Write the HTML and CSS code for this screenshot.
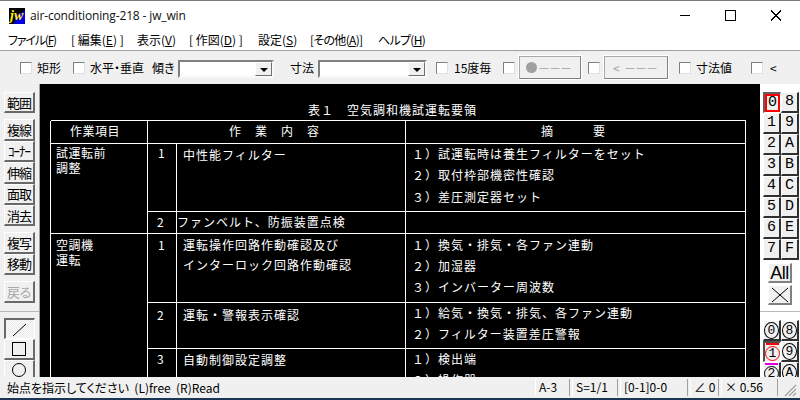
FILE: index.html
```html
<!DOCTYPE html>
<html lang="ja">
<head>
<meta charset="utf-8">
<title>air-conditioning-218 - jw_win</title>
<link rel="stylesheet" href="styles.css">
</head>
<body>
<div class="window">
  <header class="titlebar">
    <svg class="appicon" width="16" height="16" viewBox="0 0 16 16">
      <rect width="16" height="16" fill="#0000e0"/>
      <polygon points="0,0 16,0 16,3 7,7 5,16 0,16" fill="#000"/>
      <text class="appicon-text" x="1" y="12">jw</text>
    </svg>
    <span class="title">air-conditioning-218 - jw_win</span>
    <svg class="winctl" width="102" height="30" viewBox="0 0 102 30">
      <path class="ctl" d="M0 15.5H10M45.5 10.5h10v10h-10zM91 10.5l10 10M101 10.5l-10 10"/>
    </svg>
  </header>
  <nav class="menubar">
    <span class="m-file">ファイル(<u>F</u>)</span>
    <span>[ 編集(<u>E</u>) ]</span>
    <span>表示(<u>V</u>)</span>
    <span>[ 作図(<u>D</u>) ]</span>
    <span>設定(<u>S</u>)</span>
    <span class="m-tight">[その他(<u>A</u>)]</span>
    <span class="m-tight">ヘルプ(<u>H</u>)</span>
  </nav>
  <div class="toolbar">
    <i class="cb"></i><span>矩形</span>
    <i class="cb"></i><span>水平・垂直</span>
    <span>傾き</span>
    <div class="combo combo-a"><b class="arrow"></b></div>
    <span>寸法</span>
    <div class="combo combo-b"><b class="arrow"></b></div>
    <i class="cb"></i><span>15度毎</span>
    <i class="cb"></i><div class="tbtn tbtn-a"><b class="dot"></b><span class="dash">－－－</span></div>
    <i class="cb"></i><div class="tbtn tbtn-b"><span class="lt">&lt;</span><span class="dash">－－－</span></div>
    <i class="cb"></i><span>寸法値</span>
    <i class="cb"></i><span>&lt;</span>
  </div>
  <main class="body">
    <aside class="leftbar">
      <div class="group">
        <button class="btn">範囲</button>
      </div>
      <div class="group">
        <button class="btn">複線</button>
        <button class="btn">ｺｰﾅｰ</button>
        <button class="btn">伸縮</button>
        <button class="btn">面取</button>
        <button class="btn">消去</button>
      </div>
      <div class="group">
        <button class="btn">複写</button>
        <button class="btn">移動</button>
      </div>
      <div class="group">
        <button class="btn btn-off">戻る</button>
      </div>
      <hr class="sep">
      <div class="group tools">
        <button class="btn btn-in"><svg width="20" height="16" viewBox="0 0 20 16"><path class="ink" d="M3 15L16 3"/></svg></button>
        <button class="btn"><svg width="16" height="16" viewBox="0 0 16 16"><rect class="ink" x="1.5" y="1.5" width="13" height="13"/></svg></button>
        <button class="btn"><svg width="16" height="16" viewBox="0 0 16 16"><circle class="ink" cx="8" cy="8" r="6.5"/></svg></button>
      </div>
    </aside>
    <svg class="sheet" width="720" height="293" viewBox="40 84 720 293">
      <g class="rules">
        <path d="M50.5 120.5H745.5M50.5 143.5H745.5M147.5 211.5H745.5M50.5 233.5H745.5M147.5 302.5H745.5M147.5 348.5H745.5"/>
        <path d="M50.5 120.5V377M147.5 120.5V377M176.5 143.5V377M405.5 120.5V377M745.5 120.5V377"/>
      </g>
      <g class="cad">
        <text x="308" y="115">表１　空気調和機試運転要領</text>
        <text class="tight" x="70" y="136">作業項目</text>
        <text x="229" y="136">作</text><text x="255" y="136">業</text><text x="281" y="136">内</text><text x="307" y="136">容</text>
        <text x="541" y="136">摘</text><text x="593" y="136">要</text>

        <text class="tight" x="56" y="158">試運転前</text>
        <text class="tight" x="56" y="173">調整</text>
        <text x="158" y="158">1</text>
        <text x="183" y="160">中性能フィルター</text>
        <text x="412" y="159">１）試運転時は養生フィルターをセット</text>
        <text x="412" y="180">２）取付枠部機密性確認</text>
        <text x="412" y="202">３）差圧測定器セット</text>

        <text x="157" y="227">2</text>
        <text x="177" y="227">ファンベルト、防振装置点検</text>

        <text class="tight" x="56" y="250">空調機</text>
        <text class="tight" x="56" y="265">運転</text>
        <text x="158" y="250">1</text>
        <text x="183" y="250">運転操作回路作動確認及び</text>
        <text x="183" y="270">インターロック回路作動確認</text>
        <text x="412" y="250">１）換気・排気・各ファン連動</text>
        <text x="412" y="271">２）加湿器</text>
        <text x="412" y="292">３）インバーター周波数</text>

        <text x="157" y="320">2</text>
        <text x="183" y="320">運転・警報表示確認</text>
        <text x="412" y="318">１）給気・換気・排気、各ファン連動</text>
        <text x="412" y="339">２）フィルター装置差圧警報</text>

        <text x="157" y="364">3</text>
        <text x="183" y="365">自動制御設定調整</text>
        <text x="412" y="364">１）検出端</text>
        <text x="412" y="385">２）操作器</text>
      </g>
    </svg>
    <aside class="rightbar">
      <div class="layers">
        <button class="lay lay-on">0</button><button class="lay">8</button>
        <button class="lay">1</button><button class="lay">9</button>
        <button class="lay">2</button><button class="lay">A</button>
        <button class="lay">3</button><button class="lay">B</button>
        <button class="lay">4</button><button class="lay">C</button>
        <button class="lay">5</button><button class="lay">D</button>
        <button class="lay">6</button><button class="lay">E</button>
        <button class="lay">7</button><button class="lay">F</button>
      </div>
      <button class="wide all">All</button>
      <button class="wide"><svg width="18" height="16" viewBox="0 0 18 16"><path class="ink" d="M1 1L17 15M17 1L1 15"/></svg></button>
      <hr class="sep">
      <div class="groups">
        <button class="lay"><span class="ring">0</span></button><button class="lay"><span class="ring">8</span></button>
        <button class="lay lay-in bar-red"><span class="ring ring-red">1</span></button><button class="lay"><span class="ring">9</span></button>
        <button class="lay bar-mag"><span class="ring">2</span></button><button class="lay"><span class="ring">A</span></button>
      </div>
    </aside>
  </main>
  <footer class="statusbar">
    <span class="msg">始点を指示してください&nbsp;&nbsp;(L)free&nbsp;&nbsp;(R)Read</span>
    <span class="pane pane-a">A-3</span>
    <span class="pane pane-b">S=1/1</span>
    <span class="pane pane-c">[0-1]0-0</span>
    <span class="pane pane-d">∠ 0</span>
    <span class="pane pane-e">× 0.56</span>
    <svg class="grip" width="15" height="15" viewBox="0 0 15 15"><path class="gripline" d="M14 3L3 14M14 7L7 14M14 11L11 14"/></svg>
  </footer>
</div>
</body>
</html>
```
FILE: styles.css
```css
* { box-sizing: border-box; }
html, body { margin: 0; padding: 0; }
body {
  width: 800px;
  height: 400px;
  overflow: hidden;
  font: 12px/14px "Noto Sans CJK JP", "Liberation Sans", sans-serif;
  color: #000;
  background: #fff;
}
.window {
  display: flex;
  flex-direction: column;
  height: 400px;
  border-top: 1px solid #7a7a7a;
  border-bottom: 2px solid #1c3554;
}
.titlebar {
  display: flex;
  align-items: center;
  height: 29px;
  flex: none;
  padding-left: 9px;
  background: #fff;
}
.appicon { flex: none; margin-top: 1px; }
.appicon-text { font: italic bold 14px "Liberation Serif", serif; fill: #ffee00; }
.title {
  margin: 1px 0 0 5px;
  font: 12px/16px "Open Sans", "Liberation Sans", sans-serif;
  letter-spacing: -0.14px;
  color: #111;
}
.winctl { margin-left: auto; margin-right: 18px; flex: none; margin-top: -1px; }
.ctl { fill: none; stroke: #000; stroke-width: 1; shape-rendering: crispEdges; }
.menubar {
  display: grid;
  grid-template-columns: 63px 66px 52px 69px 52px 68px auto;
  justify-content: start;
  align-items: center;
  height: 20px;
  flex: none;
  padding-left: 8px;
  background: #fff;
  white-space: nowrap;
  font-feature-settings: "palt";
}
.m-file { letter-spacing: -1.2px; }
.m-tight { letter-spacing: -0.7px; }
.toolbar {
  display: grid;
  grid-template-columns: 17px 36px 17px 62px 26px 112px 28px 118px 18px 49px 16px 69px 16px 75px 17px 55px 19px 20px;
  align-items: center;
  justify-items: start;
  height: 34px;
  flex: none;
  padding-left: 20px;
  background: #f0f0f0;
  border-top: 1px solid #a0a0a0;
  white-space: nowrap;
  font-feature-settings: "palt";
}
.cb {
  display: block;
  width: 12px;
  height: 12px;
  margin-top: 1px;
  background: #fff;
  border: 1px solid;
  border-color: #808080 #e0e0e0 #e0e0e0 #808080;
}
.combo {
  position: relative;
  height: 18px;
  margin-top: 2px;
  background: #fff;
  border: 2px solid;
  border-color: #808080 #f8f8f8 #f8f8f8 #808080;
}
.combo-a { width: 96px; }
.combo-b { width: 109px; }
.arrow {
  position: absolute;
  top: 0;
  right: 0;
  bottom: 0;
  width: 17px;
  background: #f0f0f0;
  border: 1px solid;
  border-color: #fff #707070 #707070 #fff;
}
.arrow::after {
  content: "";
  position: absolute;
  left: 4px;
  top: 5px;
  border: 4px solid transparent;
  border-top-color: #000;
  border-bottom: 0;
}
.tbtn {
  display: flex;
  align-items: center;
  height: 23px;
  padding-left: 6px;
  color: #a0a0a0;
  background: #f0f0f0;
  border: 1px solid;
  border-color: #a8a8a8 #808080 #808080 #a8a8a8;
  box-shadow: 0 0 0 1px #fff;
  font-feature-settings: normal;
}
.tbtn-a { width: 62px; }
.tbtn-b { width: 64px; }
.dot {
  width: 11px;
  height: 11px;
  border-radius: 50%;
  background: #a0a0a0;
}
.lt { width: 12px; padding-left: 2px; }
.dash { letter-spacing: -1px; margin-left: 1px; }
.body {
  display: flex;
  flex: 1;
  min-height: 0;
}
.leftbar {
  flex: none;
  width: 40px;
  padding: 8px 0 0 4px;
  background: #f0f0f0;
  overflow: hidden;
  border-right: 1px solid #a0a0a0;
}
.group { display: flex; flex-direction: column; width: 31px; margin-bottom: 6px; }
.sep {
  margin: 8px 0 0;
  height: 1px;
  border: 0;
  background: #b8b8b8;
}
.leftbar .sep { margin: 8px 0 6px -4px; width: 39px; }
.tools { margin-bottom: 0; }
.btn {
  display: flex;
  align-items: center;
  justify-content: center;
  width: 31px;
  height: 21.4px;
  flex: none;
  padding: 0;
  font: 13px/15px "Noto Sans CJK JP", sans-serif;
  letter-spacing: -1px;
  color: #000;
  background: #f0f0f0;
  border: 1px solid;
  border-color: #fff #696969 #696969 #fff;
  border-width: 1px 2px 2px 1px;
  white-space: nowrap;
}
.btn-off { color: #a8a8a8; }
.btn-in {
  border-color: #696969 #fff #fff #696969;
  border-width: 2px 1px 1px 2px;
  background: repeating-conic-gradient(#fff 0 25%, #e8e8e8 0 50%) 0 0 / 2px 2px;
}
.ink { fill: none; stroke: #000; stroke-width: 1; }
.sheet { flex: none; display: block; background: #000; }
.rules path { fill: none; stroke: #fff; stroke-width: 1; shape-rendering: crispEdges; }
.cad text {
  font: 12px "Noto Sans CJK JP", sans-serif;
  letter-spacing: 1px;
  fill: #fff;
}
.cad text.tight { letter-spacing: 0.5px; }
.rightbar {
  flex: 1;
  min-width: 0;
  padding: 8px 2px 0 3px;
  background: #fff;
  overflow: hidden;
}
.layers, .groups {
  display: grid;
  grid-template-columns: 18px 18px;
  grid-auto-rows: 21px;
}
.lay {
  position: relative;
  display: flex;
  align-items: center;
  justify-content: center;
  padding: 0;
  font: 15px/16px "Liberation Mono", monospace;
  color: #000;
  background: #f0f0f0;
  border: 1px solid;
  border-color: #fff #303030 #303030 #fff;
  border-width: 1px 2px 2px 1px;
}
.lay-on {
  border-color: #606060 #fff #fff #606060;
  border-width: 2px 1px 1px 2px;
  box-shadow: inset 0 0 0 2px #ff0000;
}
.lay-in {
  border-color: #505050 #fff #fff #505050;
  border-width: 2px 1px 1px 2px;
}
.wide {
  display: flex;
  align-items: center;
  justify-content: center;
  width: 24px;
  height: 20px;
  margin: 2px 0 2px 5px;
  padding: 0;
  background: #f0f0f0;
  border: 1px solid;
  border-color: #fff #808080 #808080 #fff;
  border-width: 1px 2px 2px 1px;
}
.all {
  margin-top: 3px;
  font: 18px/18px "Liberation Sans", sans-serif;
  letter-spacing: -0.5px;
  color: #000;
}
.rightbar .sep { margin: 6px 0 8px -3px; width: 40px; }
.ring {
  display: block;
  width: 15px;
  height: 17px;
  border: 1px solid #000;
  border-radius: 50%;
  font: 13px/15px "Liberation Mono", monospace;
  text-align: center;
}
.ring-red { border-color: #ff0000; height: 15px; line-height: 13px; margin-top: 3px; }
.bar-red::before, .bar-mag::before {
  content: "";
  position: absolute;
  left: 1px;
  right: 1px;
  top: 0;
  height: 2px;
}
.bar-red::before { background: #ff0000; }
.bar-mag::before { background: #e000e0; }
.bar-mag .ring { height: 15px; line-height: 13px; margin-top: 3px; }
.statusbar {
  display: flex;
  align-items: center;
  height: 21px;
  flex: none;
  padding-left: 7px;
  background: #f0f0f0;
  white-space: nowrap;
  position: relative;
}
.msg { width: 528px; font-feature-settings: "palt"; }
.pane {
  height: 17px;
  line-height: 16px;
  padding-left: 3px;
  margin-right: 2px;
  border-left: 1px solid #fff;
  border-right: 1px solid #a0a0a0;
  flex: none;
}
.pane-a { width: 35px; }
.pane-b { width: 46px; }
.pane-c { width: 68px; }
.pane-d { width: 29px; }
.pane-e { width: 57px; }
.grip { flex: none; margin: 3px 0 0 2px; }
.gripline { fill: none; stroke: #a0a0a0; stroke-width: 1.2; }
```
